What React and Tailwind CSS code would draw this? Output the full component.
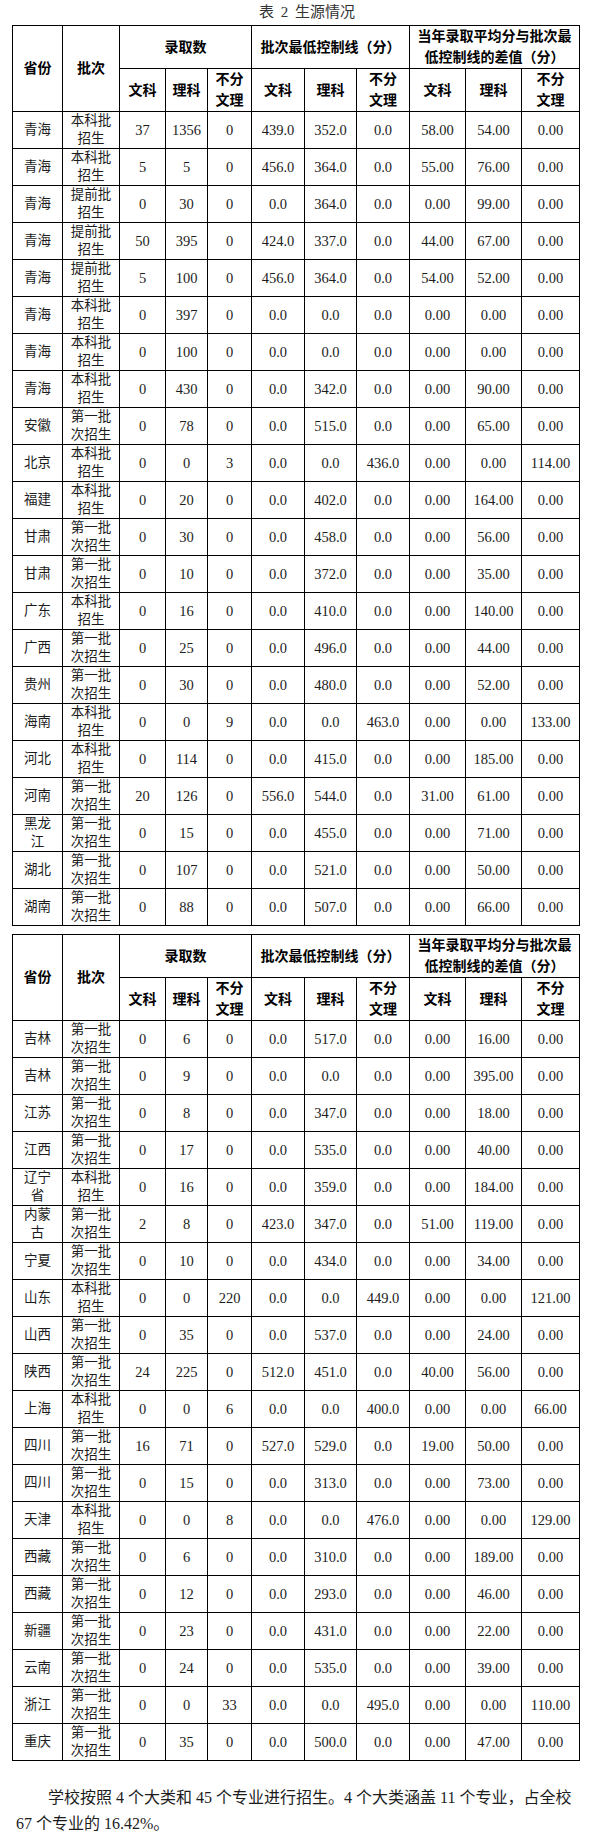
import React from "react";

const t1 = [
  ["青海", "本科批|招生", "37", "1356", "0", "439.0", "352.0", "0.0", "58.00", "54.00", "0.00"],
  ["青海", "本科批|招生", "5", "5", "0", "456.0", "364.0", "0.0", "55.00", "76.00", "0.00"],
  ["青海", "提前批|招生", "0", "30", "0", "0.0", "364.0", "0.0", "0.00", "99.00", "0.00"],
  ["青海", "提前批|招生", "50", "395", "0", "424.0", "337.0", "0.0", "44.00", "67.00", "0.00"],
  ["青海", "提前批|招生", "5", "100", "0", "456.0", "364.0", "0.0", "54.00", "52.00", "0.00"],
  ["青海", "本科批|招生", "0", "397", "0", "0.0", "0.0", "0.0", "0.00", "0.00", "0.00"],
  ["青海", "本科批|招生", "0", "100", "0", "0.0", "0.0", "0.0", "0.00", "0.00", "0.00"],
  ["青海", "本科批|招生", "0", "430", "0", "0.0", "342.0", "0.0", "0.00", "90.00", "0.00"],
  ["安徽", "第一批|次招生", "0", "78", "0", "0.0", "515.0", "0.0", "0.00", "65.00", "0.00"],
  ["北京", "本科批|招生", "0", "0", "3", "0.0", "0.0", "436.0", "0.00", "0.00", "114.00"],
  ["福建", "本科批|招生", "0", "20", "0", "0.0", "402.0", "0.0", "0.00", "164.00", "0.00"],
  ["甘肃", "第一批|次招生", "0", "30", "0", "0.0", "458.0", "0.0", "0.00", "56.00", "0.00"],
  ["甘肃", "第一批|次招生", "0", "10", "0", "0.0", "372.0", "0.0", "0.00", "35.00", "0.00"],
  ["广东", "本科批|招生", "0", "16", "0", "0.0", "410.0", "0.0", "0.00", "140.00", "0.00"],
  ["广西", "第一批|次招生", "0", "25", "0", "0.0", "496.0", "0.0", "0.00", "44.00", "0.00"],
  ["贵州", "第一批|次招生", "0", "30", "0", "0.0", "480.0", "0.0", "0.00", "52.00", "0.00"],
  ["海南", "本科批|招生", "0", "0", "9", "0.0", "0.0", "463.0", "0.00", "0.00", "133.00"],
  ["河北", "本科批|招生", "0", "114", "0", "0.0", "415.0", "0.0", "0.00", "185.00", "0.00"],
  ["河南", "第一批|次招生", "20", "126", "0", "556.0", "544.0", "0.0", "31.00", "61.00", "0.00"],
  ["黑龙|江", "第一批|次招生", "0", "15", "0", "0.0", "455.0", "0.0", "0.00", "71.00", "0.00"],
  ["湖北", "第一批|次招生", "0", "107", "0", "0.0", "521.0", "0.0", "0.00", "50.00", "0.00"],
  ["湖南", "第一批|次招生", "0", "88", "0", "0.0", "507.0", "0.0", "0.00", "66.00", "0.00"],
];

const t2 = [
  ["吉林", "第一批|次招生", "0", "6", "0", "0.0", "517.0", "0.0", "0.00", "16.00", "0.00"],
  ["吉林", "第一批|次招生", "0", "9", "0", "0.0", "0.0", "0.0", "0.00", "395.00", "0.00"],
  ["江苏", "第一批|次招生", "0", "8", "0", "0.0", "347.0", "0.0", "0.00", "18.00", "0.00"],
  ["江西", "第一批|次招生", "0", "17", "0", "0.0", "535.0", "0.0", "0.00", "40.00", "0.00"],
  ["辽宁|省", "本科批|招生", "0", "16", "0", "0.0", "359.0", "0.0", "0.00", "184.00", "0.00"],
  ["内蒙|古", "第一批|次招生", "2", "8", "0", "423.0", "347.0", "0.0", "51.00", "119.00", "0.00"],
  ["宁夏", "第一批|次招生", "0", "10", "0", "0.0", "434.0", "0.0", "0.00", "34.00", "0.00"],
  ["山东", "本科批|招生", "0", "0", "220", "0.0", "0.0", "449.0", "0.00", "0.00", "121.00"],
  ["山西", "第一批|次招生", "0", "35", "0", "0.0", "537.0", "0.0", "0.00", "24.00", "0.00"],
  ["陕西", "第一批|次招生", "24", "225", "0", "512.0", "451.0", "0.0", "40.00", "56.00", "0.00"],
  ["上海", "本科批|招生", "0", "0", "6", "0.0", "0.0", "400.0", "0.00", "0.00", "66.00"],
  ["四川", "第一批|次招生", "16", "71", "0", "527.0", "529.0", "0.0", "19.00", "50.00", "0.00"],
  ["四川", "第一批|次招生", "0", "15", "0", "0.0", "313.0", "0.0", "0.00", "73.00", "0.00"],
  ["天津", "本科批|招生", "0", "0", "8", "0.0", "0.0", "476.0", "0.00", "0.00", "129.00"],
  ["西藏", "第一批|次招生", "0", "6", "0", "0.0", "310.0", "0.0", "0.00", "189.00", "0.00"],
  ["西藏", "第一批|次招生", "0", "12", "0", "0.0", "293.0", "0.0", "0.00", "46.00", "0.00"],
  ["新疆", "第一批|次招生", "0", "23", "0", "0.0", "431.0", "0.0", "0.00", "22.00", "0.00"],
  ["云南", "第一批|次招生", "0", "24", "0", "0.0", "535.0", "0.0", "0.00", "39.00", "0.00"],
  ["浙江", "第一批|次招生", "0", "0", "33", "0.0", "0.0", "495.0", "0.00", "0.00", "110.00"],
  ["重庆", "第一批|次招生", "0", "35", "0", "0.0", "500.0", "0.0", "0.00", "47.00", "0.00"],
];

const widths = [50, 57, 46, 42, 44, 53, 52, 53, 56, 56, 58];

function Lines({ text }) {
  const parts = text.split("|");
  return (
    <>
      {parts.map((p, i) => (
        <React.Fragment key={i}>
          {i > 0 && <br />}
          {p}
        </React.Fragment>
      ))}
    </>
  );
}

const th = "border border-black p-0 text-center align-middle font-bold text-[14px] leading-[21px] text-black";
const td = "border border-black p-0 text-center align-middle text-[13.5px] leading-[18px] text-[#1c1c1c]";
const tdNum = "border border-black p-0 text-center align-middle text-[14.5px] leading-[18px] text-[#1c1c1c]";

function DataTable({ rows }) {
  return (
    <table className="table-fixed border-collapse w-[567px] ml-[12px]">
      <colgroup>
        {widths.map((w, i) => (
          <col key={i} style={{ width: w }} />
        ))}
      </colgroup>
      <thead>
        <tr className="h-[42px]">
          <th rowSpan={2} className={th}>省份</th>
          <th rowSpan={2} className={th}>批次</th>
          <th colSpan={3} className={th}>录取数</th>
          <th colSpan={3} className={th}>批次最低控制线（分）</th>
          <th colSpan={3} className={th}>
            当年录取平均分与批次最
            <br />
            低控制线的差值（分）
          </th>
        </tr>
        <tr className="h-[42px]">
          <th className={th}>文科</th>
          <th className={th}>理科</th>
          <th className={th}>不分<br />文理</th>
          <th className={th}>文科</th>
          <th className={th}>理科</th>
          <th className={th}>不分<br />文理</th>
          <th className={th}>文科</th>
          <th className={th}>理科</th>
          <th className={th}>不分<br />文理</th>
        </tr>
      </thead>
      <tbody>
        {rows.map((r, i) => (
          <tr key={i} className="h-[37px]">
            {r.map((c, j) => (
              <td key={j} className={j < 2 ? td : tdNum}>
                <Lines text={c} />
              </td>
            ))}
          </tr>
        ))}
      </tbody>
    </table>
  );
}

export default function App() {
  return (
    <div className="w-[590px] bg-white font-['Liberation_Serif','Noto_Sans_CJK_SC',serif] pb-[14px]">
      <div className="h-[25px] flex items-center justify-center pl-[24px] text-[15px] text-[#333] [word-spacing:3px]">
        表 2 生源情况
      </div>
      <DataTable rows={t1} />
      <div className="h-[8px]" />
      <DataTable rows={t2} />
      <p className="mt-[24px] px-[16px] indent-[32px] text-[16px] leading-[26px] text-[#1c1c1c]">
        学校按照 4 个大类和 45 个专业进行招生。4 个大类涵盖 11 个专业，占全校 67 个专业的 16.42%。
      </p>
    </div>
  );
}
